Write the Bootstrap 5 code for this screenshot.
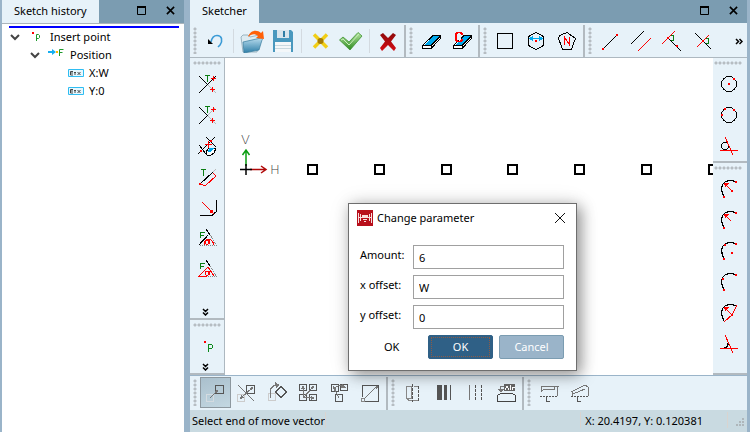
<!DOCTYPE html>
<html lang="en">
<head>
<meta charset="utf-8">
<meta name="viewport" content="width=device-width, initial-scale=1">
<title>Sketcher</title>
<link href="https://cdn.jsdelivr.net/npm/bootstrap@5.3.0/dist/css/bootstrap.min.css" rel="stylesheet">
<style>
body{font-family:"Noto Sans","Open Sans",sans-serif;font-size:11px;line-height:18px;color:#000;background:#9ab4c9}
.app{min-height:100vh;padding:0 3px 0 2px;gap:6px}
.history{flex:0 0 182px}
.dock-head{background:#7b9cb1;height:23px}
.dock-tab{background:#e7f2f9;padding:2px 12px}
.dock-btn{width:28px;height:21px;padding:0;border:0;line-height:0;color:#000}
.dock-body{border-top:1px solid #aab4bb}
.insert-line{height:2px;background:#00f;margin:2px 5px 0 7px}
.tree{padding:0 7px}
.tree-row{height:18px}
.tree-toggle{width:11px;padding:0;border:0;line-height:0}
.lvl2{padding-left:20px}
.lvl3{padding-left:59px}
.bar{background:#e7f2f9}
.bar-h{height:35px;padding:2px 0 0;border-bottom:1px solid #adb8c0}
.group-h{border-right:2px solid #b2bac0}
.group-h:last-child{border-right:0}
.group-v{border-bottom:2px solid #b2bac0;padding:0 0 0 1px}
.side-l .group-v{padding-left:3px}
.grip-h,.grip-v{flex:none;background-image:radial-gradient(circle,#b6bdc2 1px,transparent 2px);background-size:4px 4px}
.grip-h{width:4px;height:27px;margin:2px 3px}
.grip-v{height:4px;width:28px;margin:3px 0}
.tool{width:31px;height:31px;padding:3px;border:0;border-radius:0;line-height:0;flex:none;text-align:left}
.tool svg{width:24px;height:24px;display:block;shape-rendering:crispEdges}
.tool svg.soft{shape-rendering:auto}
.tool.active,.tool.active:hover{background:linear-gradient(160deg,#a9bfcc,#c4d8e2);border:0;box-shadow:inset 0 0 0 1px #8d989f}
.divide{width:1px;margin:4px 3px 4px 2px;height:24px;background:#d3dae0;flex:none}
.side{width:34px;flex:none}
.side-l{width:35px;border-right:1px solid #adb8c0}
.more{padding:0;border:0;line-height:0}
.more-v{width:25px;height:12px}
.canvas{background:#fff;min-height:317px;min-width:0}
.canvas>svg{width:100%;height:100%;left:0;top:0}
.bar-b{height:34px;margin-top:1px;padding-top:1px}
.status{background:#c9dae1;height:22px;padding:2px 3px 0 2px}
.status-sep{width:1px;height:16px;background:#d9d4d0}
.param{width:229px;left:123px;top:145px;background:#fff;border:1px solid #6e6e6e;box-shadow:4px 4px 14px rgba(0,0,0,.4),0 0 20px rgba(0,0,0,.1)}
.param-head{height:28px;padding:0 10px 0 8px}
.param-body{padding:13px 12px 11px 11px}
.param-row{height:24px;margin-bottom:6px}
.param-row label{width:53px;flex:none;line-height:20px}
.param-row input{border:1px solid #a0a0a0;height:24px;padding:0 5px;font-size:11px;border-radius:0;color:#000}
.param-actions{gap:6px}
.push{width:65px;height:24px;padding:0;font-size:11px;line-height:18px;border-radius:2px;color:#fff}
.push-ok,.push-ok:hover{background:#2f6086;border-color:#2f6086;color:#fff}
.push-ok span{outline:1px dotted #8b5b47;display:block;margin:0 3px}
.push-no,.push-no:hover{background:#9ab4c9;border-color:#7b9cb1;color:#fff}
</style>
<script src="https://cdn.jsdelivr.net/npm/bootstrap@5.3.0/dist/js/bootstrap.bundle.min.js"></script>
</head>
<body>
<svg width="0" height="0" class="position-absolute" aria-hidden="true">
<defs>
<linearGradient id="gBlue" x1="0" y1="0" x2="0" y2="1"><stop offset="0" stop-color="#b8dced"/><stop offset="1" stop-color="#2d7ea8"/></linearGradient>
<linearGradient id="gGreen" x1="0" y1="0" x2="0" y2="1"><stop offset="0" stop-color="#b6e5a0"/><stop offset="1" stop-color="#2c8a1f"/></linearGradient>
<linearGradient id="gRed" x1="0" y1="0" x2="0" y2="1"><stop offset="0" stop-color="#8e0a0a"/><stop offset="1" stop-color="#d40c14"/></linearGradient>
</defs>
<symbol id="max" viewBox="0 0 10 10"><path d="M.5.5h8v8h-8z" fill="none" stroke="#000"/><path d="M0 0h9v2H0z"/></symbol>
<symbol id="close" viewBox="0 0 10 10"><path d="M1 1l8 8M9 1L1 9" stroke="#000" stroke-width="1.800" fill="none"/></symbol>
<symbol id="chev" viewBox="0 0 10 8"><path d="M1 2l4 4 4-4" stroke="#444" stroke-width="2" fill="none"/></symbol>
<symbol id="more-h" viewBox="0 0 8 7"><path d="M1 1l2.500 2.500L1 6M4.500 1L7 3.500 4.500 6" stroke="#000" stroke-width="1.500" fill="none"/></symbol>
<symbol id="more-v" viewBox="0 0 7 8"><path d="M1 1l2.500 2.500L6 1M1 4.500L3.500 7 6 4.500" stroke="#000" stroke-width="1.500" fill="none"/></symbol>
<symbol id="undo" viewBox="0 0 24 24"><path d="M8 13C9 8 11 6.500 14 6.500c5 0 6 5 3 9.500l-2 2" stroke="#3b9bd6" stroke-width="1.600" fill="none"/><path d="M5 10v5h5z"/></symbol>
<symbol id="open" viewBox="0 0 24 24"><path d="M1 8l2-2h5l2 2 9-2 1 4-3 13-14 0z" fill="#dcebf2" stroke="#7d9bab" stroke-width=".7"/><path d="M3 13l18-4c1 0 2 1 1 2l-3 10-15 3z" fill="url(#gBlue)" stroke="#397c9d" stroke-width=".7"/><path d="M8 8c2-7 9-8 13-4l2-2 1 8-8-1 2-2c-3-3-7-2-10 1z" fill="#ff6008"/></symbol>
<symbol id="save" viewBox="0 0 24 24"><path d="M2 1h18l2 2v20H2z" fill="#4898be"/><path d="M6 1h12v8H6z" fill="#d8e5ed"/><path d="M12 2h2v6h-2z" fill="#2f7da5"/><path d="M4 13h16v10H4z" fill="#f3f7f9"/><path d="M4 16.500h16M4 19.500h16" stroke="#c8d8df"/></symbol>
<symbol id="xgold" viewBox="0 0 24 24"><path d="M6 5.500l13 13M19 5.500l-13 13" stroke="#f1ce16" stroke-width="3.500"/><circle cx="12.500" cy="12" r="3" fill="#a67c05"/></symbol>
<symbol id="check" viewBox="0 0 24 24"><path d="M.5 11L4 8l6 5L19 3.500 23 7 11 21z" fill="url(#gGreen)" stroke="#3c9330" stroke-width=".8"/><path d="M2 11l2-1 6 6L20 5" fill="none" stroke="#c8edbb"/></symbol>
<symbol id="xred" viewBox="0 0 24 24"><path d="M4 6l3-2 5 5 5-5 3 2-5 6.500 5 6.500-2 3-6-6-6 6-2-3 5-6.500z" fill="url(#gRed)"/></symbol>
<symbol id="eraser" viewBox="0 0 24 24"><path d="M3.500 16.500L14 6.500h7.500v3L12 19.500H3.500z" fill="#fff" stroke="#000"/><path d="M6 15.500L15 7h5l-8.500 8.500z" fill="#00a9ee"/><path d="M4 16.500h8l9-9M12 16.500v3" stroke="#000" fill="none"/></symbol>
<symbol id="eraserc" viewBox="0 0 24 24"><use href="#eraser"/><path d="M5 3h6v8H5z" fill="#e7f2f9"/><path d="M12 6V5l-1.500-1.500h-3L6 5v6l1.500 1.500h3L12 11v-1" stroke="#f00" stroke-width="1.600" fill="none"/></symbol>
<symbol id="square" viewBox="0 0 24 24"><path d="M4.500 4.500h15v15h-15z" fill="none" stroke="#000"/></symbol>
<symbol id="hexa" viewBox="0 0 24 24"><path d="M12 3.500l7.500 4v9l-7.500 4-7.500-4v-9z" fill="none" stroke="#000"/><path d="M7 9.500h11" stroke="#00a9ee"/><path d="M5 9.500l4-3v6zM19 9.500l-4-3v6z" fill="#00a9ee"/><path d="M11 11h2v2h-2z" fill="#f00"/></symbol>
<symbol id="penta" viewBox="0 0 24 24"><path d="M12 3.500l8.500 6-4 10.500h-9L3.500 9.500l1-3z" fill="none" stroke="#000"/><path d="M9.500 16V8.500l5 7V8" fill="none" stroke="#f00" stroke-width="1.200"/></symbol>
<symbol id="line" viewBox="0 0 24 24"><path d="M5 20L19 6" stroke="#000"/><path d="M4 19h2v2H4zM18 5h2v2h-2z" fill="#f00"/></symbol>
<symbol id="para" viewBox="0 0 24 24"><path d="M2 15L15 2" stroke="#000"/><path d="M9 22L22 9" stroke="#f00"/></symbol>
<symbol id="perp" viewBox="0 0 24 24"><path d="M8 9l13 13" stroke="#000"/><path d="M2 15L15 2" stroke="#f00"/><path d="M11 6c4 0 4 6 0 6" stroke="#0a7d12" fill="none"/><path d="M16 16h2v2h-2zM7 8h2v2H7z" fill="#f00"/></symbol>
<symbol id="cross" viewBox="0 0 24 24"><path d="M4 4l16 16" stroke="#000"/><path d="M6 18L18 6" stroke="#f00"/><path d="M15 9c4 0 4 6 0 6" stroke="#0a7d12" fill="none"/><path d="M11 11h2v2h-2z" fill="#f00"/></symbol>
<symbol id="tA" viewBox="0 0 24 24"><path d="M3 21L20 4M3 4l9 9" stroke="#000"/><path d="M12 13l8 8" stroke="#b9b9b9"/><path d="M9 3.500h5M11.500 3v7" stroke="#0a7d12"/><path d="M15 6.500h5M17.500 4v5M14 17.500h5M16.500 15v5" stroke="#f00"/></symbol>
<symbol id="tB" viewBox="0 0 24 24"><path d="M3 21l9-9M3 4l9 9" stroke="#000"/><path d="M12 13l8 8M12 12l7-7" stroke="#b9b9b9"/><path d="M9 3.500h5M11.500 3v7" stroke="#0a7d12"/><path d="M15 6.500h5M17.500 4v5M14 17.500h5M16.500 15v5" stroke="#f00"/></symbol>
<symbol id="tC" viewBox="0 0 24 24"><path d="M2 20L19 3M10 3l10 10M3 11l7 9" stroke="#000"/><path d="M10 18l3-4h7l-2 5-3 2h-4z" fill="#fff" stroke="#000"/><path d="M13 14h5l-3 4h-3z" fill="#00a9ee"/><path d="M9 10.500h7M12.500 7v7" stroke="#f00"/><path d="M4 16h2v2H4zM14 6h2v2h-2z" fill="#f00"/></symbol>
<symbol id="tD" viewBox="0 0 24 24"><path d="M4 19L17 7" stroke="#000"/><path d="M17 7l3-3" stroke="#bbb"/><path d="M17 8l3 3L9 21l-4-2" stroke="#f00" fill="none"/><path d="M5 4.500h5M7.500 4v7" stroke="#0a7d12"/><path d="M3 18h2v2H3z" fill="#f00"/></symbol>
<symbol id="tE" viewBox="0 0 24 24"><path d="M4 19.500h12l4.500-4V4" stroke="#000" stroke-width="1.200" fill="none"/><path d="M6 6l10 10" stroke="#f00"/><path d="M18 18l-5-2 3-3z" fill="#f00"/></symbol>
<symbol id="tF" viewBox="0 0 24 24"><path d="M4 18.500h17M14 8l6 9" stroke="#888" stroke-dasharray="1 1"/><path d="M3 18l9-10M10 2l4 6" stroke="#000" stroke-width="1.200"/><path d="M4.500 11V5h4M4.500 8H8" stroke="#0a7d12" fill="none"/><path d="M8 18c0-7 8-8 10 0M14 13l-2 4h-2l-1-2 1-2h2l2 4" stroke="#f00" fill="none"/></symbol>
<symbol id="tG" viewBox="0 0 24 24"><path d="M14 8l6 10" stroke="#888" stroke-dasharray="1 1"/><path d="M10 2l4 6" stroke="#000"/><path d="M4.500 11V5h4M4.500 8H8" stroke="#0a7d12" fill="none"/><path d="M2 19l10-10 6 9M2 18.500h9M14 13l-2 4h-2l-1-2 1-2h2l2 4" stroke="#f00" fill="none"/><path d="M12 18.500h9" stroke="#888" stroke-dasharray="1 1"/></symbol>
<symbol id="pt" viewBox="0 0 24 24"><path d="M8 7h2v2H8z" fill="#f00"/><path d="M12.500 18v-7.500h3l1 1v2l-1 1h-3" stroke="#0a8a1a" fill="none"/></symbol>
<symbol id="c1" viewBox="0 0 24 24"><circle cx="12" cy="12" r="7.500" fill="none" stroke="#000"/><path d="M11 11h2v2h-2zM16 6h2v2h-2z" fill="#f00"/></symbol>
<symbol id="c2" viewBox="0 0 24 24"><circle cx="12" cy="12" r="7.500" fill="none" stroke="#000"/><path d="M7 5h2v2H7zM16 6h2v2h-2zM4 11h2v2H4z" fill="#f00"/></symbol>
<symbol id="c3" viewBox="0 0 24 24"><circle cx="8" cy="12" r="3.500" fill="none" stroke="#000"/><path d="M3 16.500h18M8 3l8 18" stroke="#f00"/></symbol>
<symbol id="arc" viewBox="0 0 24 24"><path d="M7 20C3 12 5 7 8 5q5-3 11 0" stroke="#000" stroke-width="1.200" fill="none"/></symbol>
<symbol id="a1" viewBox="0 0 24 24"><use href="#arc"/><path d="M15 14L9 8" stroke="#f00"/><path d="M7 6h5l-4 4zM14 13h2v2h-2zM18 4h2v2h-2zM6 19h2v2H6z" fill="#f00"/></symbol>
<symbol id="a2" viewBox="0 0 24 24"><use href="#arc"/><path d="M14 13L9 8" stroke="#f00"/><path d="M7 6h5l-4 4zM18 4h2v2h-2zM6 19h2v2H6z" fill="#f00"/></symbol>
<symbol id="a3" viewBox="0 0 24 24"><use href="#arc"/><path d="M7 5h2v2H7zM14 13h2v2h-2zM18 4h2v2h-2zM6 19h2v2H6z" fill="#f00"/></symbol>
<symbol id="a4" viewBox="0 0 24 24"><use href="#arc"/><path d="M5 8h2v2H5zM18 4h2v2h-2zM6 19h2v2H6z" fill="#f00"/></symbol>
<symbol id="a5" viewBox="0 0 24 24"><use href="#arc"/><path d="M20 4l-5 10-8 7M15 14L9 8" stroke="#f00" fill="none"/><path d="M7 6h5l-4 4zM14 13h2v2h-2z" fill="#f00"/></symbol>
<symbol id="a6" viewBox="0 0 24 24"><path d="M7 15.500c4 0 4-2 4-5" stroke="#000" stroke-width="1.500" fill="none"/><path d="M3 16.500h18M8 3l8 18" stroke="#f00"/></symbol>
<symbol id="b1" viewBox="0 0 24 24"><path d="M12.500 4.500h8v8h-8z" fill="none" stroke="#555"/><path d="M3.500 13.500h7v7h-7z" fill="none" stroke="#d4dbe0"/><path d="M7 17l6-6" stroke="#777"/><path d="M15 9l-1 4-3-3z" fill="#777"/></symbol>
<symbol id="b2" viewBox="0 0 24 24"><path d="M12.500 4.500h8v8h-8z" fill="none" stroke="#555"/><path d="M3.500 13.500h7v7h-7z" fill="none" stroke="#ccc"/><path d="M4 4l16 16M7 17L18 7" stroke="#777"/><path d="M19 6l-1 4-3-3zM6 18l1-4 3 3z" fill="#777"/></symbol>
<symbol id="b3" viewBox="0 0 24 24"><path d="M16 5.500l5.500 5.500-5.500 5.500-5.500-5.500z" fill="none" stroke="#555"/><path d="M3.500 12.500h7v7h-7z" fill="none" stroke="#ccc"/><path d="M6 17C4 9 6 5 11 4" stroke="#777" fill="none"/><path d="M10 1l5 3-4 3z" fill="#777"/></symbol>
<symbol id="b4" viewBox="0 0 24 24"><path d="M3.500 3.500h7v6h-7zM13.500 3.500h7v6h-7zM3.500 13.500h7v6h-7zM13.500 13.500h7v6h-7z" fill="none" stroke="#555"/><path d="M7 17V6M7 16.500h11M7 17L17 6" stroke="#777"/><path d="M5 8l2-4 2 4zM15 15l4 2-4 2zM18 5l-1 4-3-3z" fill="#777"/></symbol>
<symbol id="b5" viewBox="0 0 24 24"><path d="M4.500 3.500h7v7h-7zM13.500 3.500h7v6h-7zM8.500 13.500h7v7h-7z" fill="none" stroke="#555"/><path d="M12 17L7 7M7 7q5-4 10-1" stroke="#777" fill="none"/><path d="M6 5l4 3-3 2zM15 3l4 4-5 0z" fill="#777"/></symbol>
<symbol id="b6" viewBox="0 0 24 24"><path d="M4.500 16V4.500h16v16H7" fill="none" stroke="#555"/><path d="M3.500 17.500h3v3h-3z" fill="none" stroke="#888"/><path d="M6 18L18 6" stroke="#777"/><path d="M20 5l-1 4-3-3z" fill="#777"/></symbol>
<symbol id="m1" viewBox="0 0 24 24"><path d="M5.500 5.500h5v12h-5zM5 17l3 2.500h9M13 5.500h4" fill="none" stroke="#888"/><path d="M17.500 5v15M11.500 3v18" stroke="#555" stroke-dasharray="3 1"/></symbol>
<symbol id="m2" viewBox="0 0 24 24"><path d="M5 4h5v15H5zM12 4h3v15h-3zM18 4h1v15h-1z" fill="#555"/></symbol>
<symbol id="m3" viewBox="0 0 24 24"><path d="M6.500 4v15" stroke="#777"/><path d="M12.500 4v15M18.500 4v15" stroke="#555" stroke-dasharray="3 1"/></symbol>
<symbol id="m4" viewBox="0 0 24 24"><path d="M10 3h11v7H10z" fill="#666"/><path d="M11 9l2-4 2 4M16.500 4v5M18.500 9V6.500h2" fill="none" stroke="#fff"/><path d="M3.500 20.500v-6l3-2h12l3 2v6z" fill="none" stroke="#444"/><path d="M10 5.500H6.500v4" fill="none" stroke="#777"/><path d="M4 8h6l-3 4z" fill="#777"/></symbol>
<symbol id="n1" viewBox="0 0 24 24"><path d="M3.500 5.500h18M4.500 6v4l3-2h10V6M20.500 6v9" fill="none" stroke="#777"/><path d="M3 15.500h18" stroke="#555" stroke-dasharray="2 1"/><path d="M9.500 16v4.500h3" fill="none" stroke="#555"/></symbol>
<symbol id="n2" viewBox="0 0 24 24"><path d="M3 11l14-7 3 2v9M5 13l12-5M4.500 11v4" fill="none" stroke="#777"/><path d="M3 15.500h18" stroke="#555" stroke-dasharray="2 1"/><path d="M9.500 16v4.500h3" fill="none" stroke="#555"/></symbol>
</svg>

<div class="app d-flex">
  <aside class="history d-flex flex-column">
    <div class="dock-head d-flex align-items-start">
      <div class="dock-tab me-auto h-100">Sketch history</div>
      <button class="btn dock-btn" aria-label="Maximise history"><svg width="10" height="10"><use href="#max"/></svg></button>
      <button class="btn dock-btn" aria-label="Close history"><svg width="9" height="9"><use href="#close"/></svg></button>
    </div>
    <div class="dock-body bg-white flex-grow-1">
      <div class="insert-line"></div>
      <div class="tree">
        <div class="tree-row d-flex align-items-center"><button class="btn tree-toggle" aria-label="Collapse Insert point"><svg width="10" height="8"><use href="#chev"/></svg></button>
          <svg class="ms-1 me-1" width="22" height="18" viewBox="0 0 22 18" aria-hidden="true"><path d="M8 4h2v2H8z" fill="#f00"/><path d="M12.500 13V6.500h2l1 1v2l-1 1h-2" fill="none" stroke="#1d9a2b"/></svg><span>Insert point</span></div>
        <div class="tree-row lvl2 d-flex align-items-center"><button class="btn tree-toggle" aria-label="Collapse Position"><svg width="10" height="8"><use href="#chev"/></svg></button>
          <svg class="ms-1 me-1" width="22" height="18" viewBox="0 0 22 18" aria-hidden="true"><path d="M4 5h4V3l4 3-4 3V7H4z" fill="#16aef0"/><path d="M12 5h2v2h-2z" fill="#fb0"/><path d="M15.500 10V3.500h4M15.500 6.500h3" fill="none" stroke="#1d9a2b"/></svg><span>Position</span></div>
        <div class="tree-row lvl3 d-flex align-items-center"><svg class="me-1" width="17" height="10" viewBox="0 0 17 10" aria-hidden="true"><path d="M.5 1.500h15v7H.5z" fill="#e6f7fe" stroke="#2fbdf2"/><path d="M5 3.500H2.500v3.500H5M2.500 5H5M6 4.500h2M6 6h2M9.500 4l3 3M12.500 4l-3 3" fill="none" stroke="#333" stroke-width=".9"/></svg><span>X:W</span></div>
        <div class="tree-row lvl3 d-flex align-items-center"><svg class="me-1" width="17" height="10" viewBox="0 0 17 10" aria-hidden="true"><path d="M.5 1.500h15v7H.5z" fill="#e6f7fe" stroke="#2fbdf2"/><path d="M5 3.500H2.500v3.500H5M2.500 5H5M6 4.500h2M6 6h2M9.500 4l3 3M12.500 4l-3 3" fill="none" stroke="#333" stroke-width=".9"/></svg><span>Y:0</span></div>
      </div>
    </div>
  </aside>

  <main class="d-flex flex-column flex-grow-1">
    <div class="dock-head d-flex align-items-start">
      <div class="dock-tab me-auto h-100">Sketcher</div>
      <button class="btn dock-btn" aria-label="Maximise sketcher"><svg width="10" height="10"><use href="#max"/></svg></button>
      <button class="btn dock-btn" aria-label="Close sketcher"><svg width="9" height="9"><use href="#close"/></svg></button>
    </div>

    <div class="bar bar-h d-flex">
      <div class="group-h d-flex"><i class="grip-h"></i>
        <button class="btn tool" aria-label="Undo"><svg class="soft"><use href="#undo"/></svg></button><i class="divide"></i>
        <button class="btn tool" aria-label="Open"><svg class="soft"><use href="#open"/></svg></button>
        <button class="btn tool" aria-label="Save"><svg class="soft"><use href="#save"/></svg></button><i class="divide"></i>
        <button class="btn tool" aria-label="Discard"><svg class="soft"><use href="#xgold"/></svg></button>
        <button class="btn tool" aria-label="Accept"><svg class="soft"><use href="#check"/></svg></button><i class="divide"></i>
        <button class="btn tool" aria-label="Cancel sketch"><svg class="soft"><use href="#xred"/></svg></button>
      </div>
      <div class="group-h d-flex"><i class="grip-h"></i>
        <button class="btn tool" aria-label="Erase"><svg><use href="#eraser"/></svg></button>
        <button class="btn tool" aria-label="Erase constraint"><svg><use href="#eraserc"/></svg></button>
      </div>
      <div class="group-h d-flex"><i class="grip-h"></i>
        <button class="btn tool" aria-label="Rectangle"><svg><use href="#square"/></svg></button>
        <button class="btn tool" aria-label="Hexagon"><svg><use href="#hexa"/></svg></button>
        <button class="btn tool" aria-label="Polygon"><svg><use href="#penta"/></svg></button>
      </div>
      <div class="group-h d-flex flex-grow-1"><i class="grip-h"></i>
        <button class="btn tool" aria-label="Line"><svg><use href="#line"/></svg></button>
        <button class="btn tool" aria-label="Parallel"><svg><use href="#para"/></svg></button>
        <button class="btn tool" aria-label="Perpendicular"><svg><use href="#perp"/></svg></button>
        <button class="btn tool" aria-label="Perpendicular through point"><svg><use href="#cross"/></svg></button>
        <button class="btn more ms-auto me-1" aria-label="More tools"><svg width="8" height="7"><use href="#more-h"/></svg></button>
      </div>
    </div>

    <div class="d-flex flex-grow-1">
      <div class="bar side side-l d-flex flex-column">
        <div class="group-v d-flex flex-column flex-grow-1"><i class="grip-v"></i>
          <button class="btn tool" aria-label="Trim"><svg><use href="#tA"/></svg></button>
          <button class="btn tool" aria-label="Trim both"><svg><use href="#tB"/></svg></button>
          <button class="btn tool" aria-label="Erase between"><svg><use href="#tC"/></svg></button>
          <button class="btn tool" aria-label="Offset"><svg><use href="#tD"/></svg></button>
          <button class="btn tool" aria-label="Fillet"><svg><use href="#tE"/></svg></button>
          <button class="btn tool" aria-label="Angle"><svg><use href="#tF"/></svg></button>
          <button class="btn tool" aria-label="Angle from edge"><svg><use href="#tG"/></svg></button>
          <button class="btn more more-v mt-auto" aria-label="More edit tools"><svg width="7" height="8"><use href="#more-v"/></svg></button>
        </div>
        <div class="group-v d-flex flex-column"><i class="grip-v"></i>
          <button class="btn tool" aria-label="Point"><svg><use href="#pt"/></svg></button>
          <button class="btn more more-v" aria-label="More point tools"><svg width="7" height="8"><use href="#more-v"/></svg></button>
        </div>
      </div>

      <div class="canvas position-relative flex-grow-1">
        <svg class="position-absolute" role="img" aria-label="Sketch with seven points along the H axis">
          <g fill="none" stroke="#000" stroke-width="2"><path d="M83 107h9v9h-9zM150 107h9v9h-9zM217 107h9v9h-9zM283 107h9v9h-9zM350 107h9v9h-9zM417 107h9v9h-9zM484 107h9v9h-9z"/></g>
          <path d="M21 108V93M17.500 97l3.500-5 3.500 5" fill="none" stroke="#0a9d12" stroke-width="1.500"/>
          <path d="M25 111.500h15M36 108l5 3.500-5 3.500" fill="none" stroke="#b00808" stroke-width="1.500"/>
          <path d="M15 111.500h12M21 106v11" stroke="#000" stroke-width="1.500"/>
          <g font-family="DejaVu Sans, sans-serif" font-size="13" font-weight="200" fill="#444"><text x="16" y="86">V</text><text x="45" y="116">H</text></g>
        </svg>

        <form class="param position-absolute" role="dialog" aria-labelledby="paramTitle">
          <div class="param-head d-flex align-items-center">
            <svg width="16" height="16" viewBox="0 0 16 16" aria-hidden="true"><path d="M0 0h16v16H0z" fill="#b80f1b"/><path d="M1 3h1v10H1zM3 4h1v7H3zM14 3h1v10h-1zM12 4h1v7h-1zM5 5h6v3H5z" fill="#f7dddd"/><path d="M2 7.500h12M6 9.500h4M7 11.500h2" stroke="#f7dddd" fill="none"/></svg>
            <span id="paramTitle" class="ms-1 me-auto">Change parameter</span>
            <button type="button" class="btn more" aria-label="Close dialog"><svg width="12" height="12" viewBox="0 0 12 12"><path d="M1 1l10 10M11 1L1 11" stroke="#111" fill="none"/></svg></button>
          </div>
          <div class="param-body">
            <div class="param-row d-flex"><label for="amount">Amount:</label><input id="amount" class="form-control" value="6"></div>
            <div class="param-row d-flex"><label for="xoff">x offset:</label><input id="xoff" class="form-control" value="W"></div>
            <div class="param-row d-flex"><label for="yoff">y offset:</label><input id="yoff" class="form-control" value="0"></div>
            <div class="param-actions d-flex align-items-center"><span class="me-auto ps-4">OK</span>
              <button type="button" class="btn push push-ok"><span>OK</span></button>
              <button type="button" class="btn push push-no">Cancel</button></div>
          </div>
        </form>
      </div>

      <div class="bar side d-flex flex-column">
        <div class="group-v d-flex flex-column"><i class="grip-v"></i>
          <button class="btn tool" aria-label="Circle by centre"><svg><use href="#c1"/></svg></button>
          <button class="btn tool" aria-label="Circle by three points"><svg><use href="#c2"/></svg></button>
          <button class="btn tool" aria-label="Tangent circle"><svg><use href="#c3"/></svg></button>
        </div>
        <div class="group-v d-flex flex-column flex-grow-1"><i class="grip-v"></i>
          <button class="btn tool" aria-label="Arc by centre"><svg><use href="#a1"/></svg></button>
          <button class="btn tool" aria-label="Arc by radius"><svg><use href="#a2"/></svg></button>
          <button class="btn tool" aria-label="Arc by centre and points"><svg><use href="#a3"/></svg></button>
          <button class="btn tool" aria-label="Arc by three points"><svg><use href="#a4"/></svg></button>
          <button class="btn tool" aria-label="Arc by angle"><svg><use href="#a5"/></svg></button>
          <button class="btn tool" aria-label="Tangent arc"><svg><use href="#a6"/></svg></button>
        </div>
      </div>
    </div>

    <div class="bar bar-b d-flex">
      <div class="group-h d-flex align-items-start"><i class="grip-h"></i>
        <button class="btn tool active" aria-label="Move"><svg><use href="#b1"/></svg></button>
        <button class="btn tool" aria-label="Mirror"><svg><use href="#b2"/></svg></button>
        <button class="btn tool" aria-label="Rotate"><svg><use href="#b3"/></svg></button>
        <button class="btn tool" aria-label="Copy grid"><svg><use href="#b4"/></svg></button>
        <button class="btn tool" aria-label="Copy around"><svg><use href="#b5"/></svg></button>
        <button class="btn tool" aria-label="Scale"><svg><use href="#b6"/></svg></button>
      </div>
      <div class="group-h d-flex align-items-start"><i class="grip-h"></i>
        <button class="btn tool" aria-label="Panel"><svg><use href="#m1"/></svg></button>
        <button class="btn tool" aria-label="Line weight"><svg><use href="#m2"/></svg></button>
        <button class="btn tool" aria-label="Line style"><svg><use href="#m3"/></svg></button>
        <button class="btn tool" aria-label="Attributes"><svg><use href="#m4"/></svg></button>
      </div>
      <div class="group-h d-flex align-items-start"><i class="grip-h"></i>
        <button class="btn tool" aria-label="Profile"><svg><use href="#n1"/></svg></button>
        <button class="btn tool" aria-label="Sloped profile"><svg><use href="#n2"/></svg></button>
      </div>
    </div>

    <footer class="status d-flex align-items-start">
      <span>Select end of move vector</span><i class="status-sep"></i>
      <i class="status-sep ms-auto me-1"></i><span>X: 20.4197, Y: 0.120381</span><i class="status-sep ms-4 me-2"></i>
      <svg width="8" height="16" viewBox="0 0 8 16" aria-hidden="true"><path d="M6 6h2v2H6zM3 9h2v2H3zM6 9h2v2H6zM0 12h2v2H0zM3 12h2v2H3zM6 12h2v2H6z" fill="#aeb6ba"/></svg>
    </footer>
  </main>
</div>
</body>
</html>
